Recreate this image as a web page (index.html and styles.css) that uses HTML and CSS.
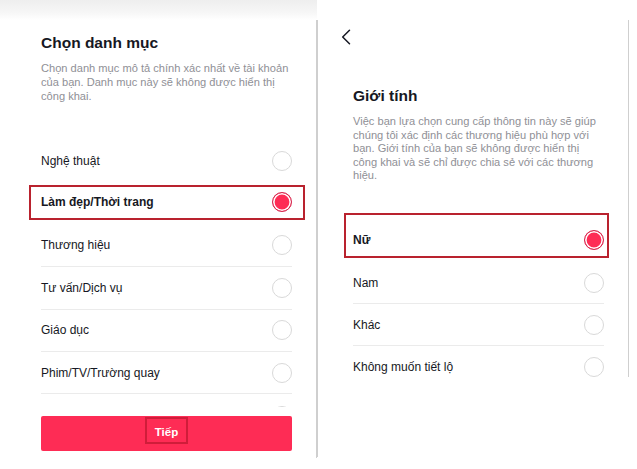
FILE: index.html
```html
<!DOCTYPE html>
<html lang="vi">
<head>
<meta charset="utf-8">
<title>Chọn danh mục / Giới tính</title>
<link rel="stylesheet" href="styles.css">
</head>
<body>
<div class="screens">
  <section class="screen screen-left">
    <div class="topbar"></div>
    <div class="panel">
      <h1 class="title">Chọn danh mục</h1>
      <p class="desc">Chọn danh mục mô tả chính xác nhất về tài khoản của bạn. Danh mục này sẽ không được hiển thị công khai.</p>
      <div class="list list-cat">
        <div class="row"><span>Nghệ thuật</span><span class="radio"></span></div>
        <div class="row selected sel-left"><span class="label-bold">Làm đẹp/Thời trang</span><span class="radio on"></span></div>
        <div class="row sep"><span>Thương hiệu</span><span class="radio"></span></div>
        <div class="row sep"><span>Tư vấn/Dịch vụ</span><span class="radio"></span></div>
        <div class="row sep"><span>Giáo dục</span><span class="radio"></span></div>
        <div class="row sep"><span>Phim/TV/Trường quay</span><span class="radio"></span></div>
        <div class="row"><span></span><span class="radio"></span></div>
      </div>
      <button class="next"><span class="mark">Tiếp</span></button>
    </div>
  </section>
  <section class="screen screen-right">
    <div class="panel-r">
      <div class="inner">
        <svg class="back" viewBox="0 0 10 16" width="10" height="16"><path d="M8.5 1.2 L1.7 8 L8.5 14.8" fill="none" stroke="#161823" stroke-width="1.5" stroke-linecap="round" stroke-linejoin="round"/></svg>
        <h1 class="title title-r">Giới tính</h1>
        <p class="desc desc-r">Việc bạn lựa chọn cung cấp thông tin này sẽ giúp chúng tôi xác định các thương hiệu phù hợp với bạn. Giới tính của bạn sẽ không được hiển thị công khai và sẽ chỉ được chia sẻ với các thương hiệu.</p>
        <div class="list list-gender">
          <div class="row selected sel-right"><span class="label-bold">Nữ</span><span class="radio on"></span></div>
          <div class="row r42 sep"><span>Nam</span><span class="radio"></span></div>
          <div class="row r42 sep"><span>Khác</span><span class="radio"></span></div>
          <div class="row r42"><span>Không muốn tiết lộ</span><span class="radio"></span></div>
        </div>
      </div>
    </div>
  </section>
</div>
</body>
</html>
```
FILE: styles.css
```css
* { box-sizing: border-box; }
html, body {
  margin: 0;
  padding: 0;
  background: #fff;
}
body {
  width: 637px;
  height: 469px;
  overflow: hidden;
  font-family: "Liberation Sans", Arial, sans-serif;
  color: #161823;
}
.screens {
  display: flex;
  align-items: flex-start;
}
.screen-left {
  width: 317px;
  flex: none;
}
.topbar {
  height: 20px;
  background: linear-gradient(#eeeeee, #f6f6f6 60%, #ffffff);
}
.panel {
  height: 438px;
  border-right: 1px solid #cfcfcf;
  padding: 0 24px 0 41px;
  display: flex;
  flex-direction: column;
}
.title {
  margin: 13px 0 0;
  font-size: 15.5px;
  line-height: 20px;
  font-weight: 700;
  color: #161823;
}
.desc {
  margin: 8px 0 0;
  font-size: 11.1px;
  line-height: 14px;
  color: #8f9096;
}
.list-cat {
  margin-top: 37px;
  height: 267px;
  overflow-x: visible;
  overflow-y: clip;
  flex: none;
}
.row {
  height: 42.4px;
  display: flex;
  align-items: center;
  justify-content: space-between;
  font-size: 12px;
  color: #161823;
}
.row.r42 { height: 42px; }
.row.sep { border-bottom: 1px solid #ebebeb; }
.label-bold { font-weight: 700; }
.radio {
  width: 20px;
  height: 20px;
  border-radius: 50%;
  border: 1px solid #d9d9d9;
  flex: none;
}
.radio.on {
  border: 1.5px solid #d3294f;
  background: #fe2c55;
  box-shadow: inset 0 0 0 1.6px #fff;
}
.selected {
  border: 2px solid #b9222e;
}
.sel-left {
  height: 35px;
  margin: 2.6px -13px 4.8px -12px;
  padding: 0 11px 0 10px;
}
.next {
  margin-top: 9px;
  height: 35px;
  width: 100%;
  border: 0;
  border-radius: 2px;
  background: #fe2c55;
  display: flex;
  justify-content: center;
  align-items: flex-start;
  padding: 1px 0 0;
  font-family: inherit;
  flex: none;
}
.mark {
  display: inline-block;
  border: 2px solid #cf1d3a;
  padding: 7px 8px 3px;
  color: #fff;
  font-size: 11.5px;
  line-height: 13px;
  font-weight: 700;
}
.screen-right {
  width: 320px;
  flex: none;
}
.panel-r {
  margin-top: 20px;
  height: 437px;
  border-left: 1px solid #cfcfcf;
}
.inner {
  width: 311px;
  height: 357px;
  border-right: 1px solid #cfcfcf;
  padding: 9px 24px 0 35px;
}
.back {
  display: block;
  margin: 0 0 0 -12px;
}
.title-r {
  margin-top: 41px;
}
.desc-r {
  margin-top: 9px;
  line-height: 13.5px;
}
.list-gender {
  margin-top: 30.5px;
}
.sel-right {
  height: 45px;
  margin: 0 -5px 4px -9px;
  padding: 9px 3px 0 7px;
}
```
